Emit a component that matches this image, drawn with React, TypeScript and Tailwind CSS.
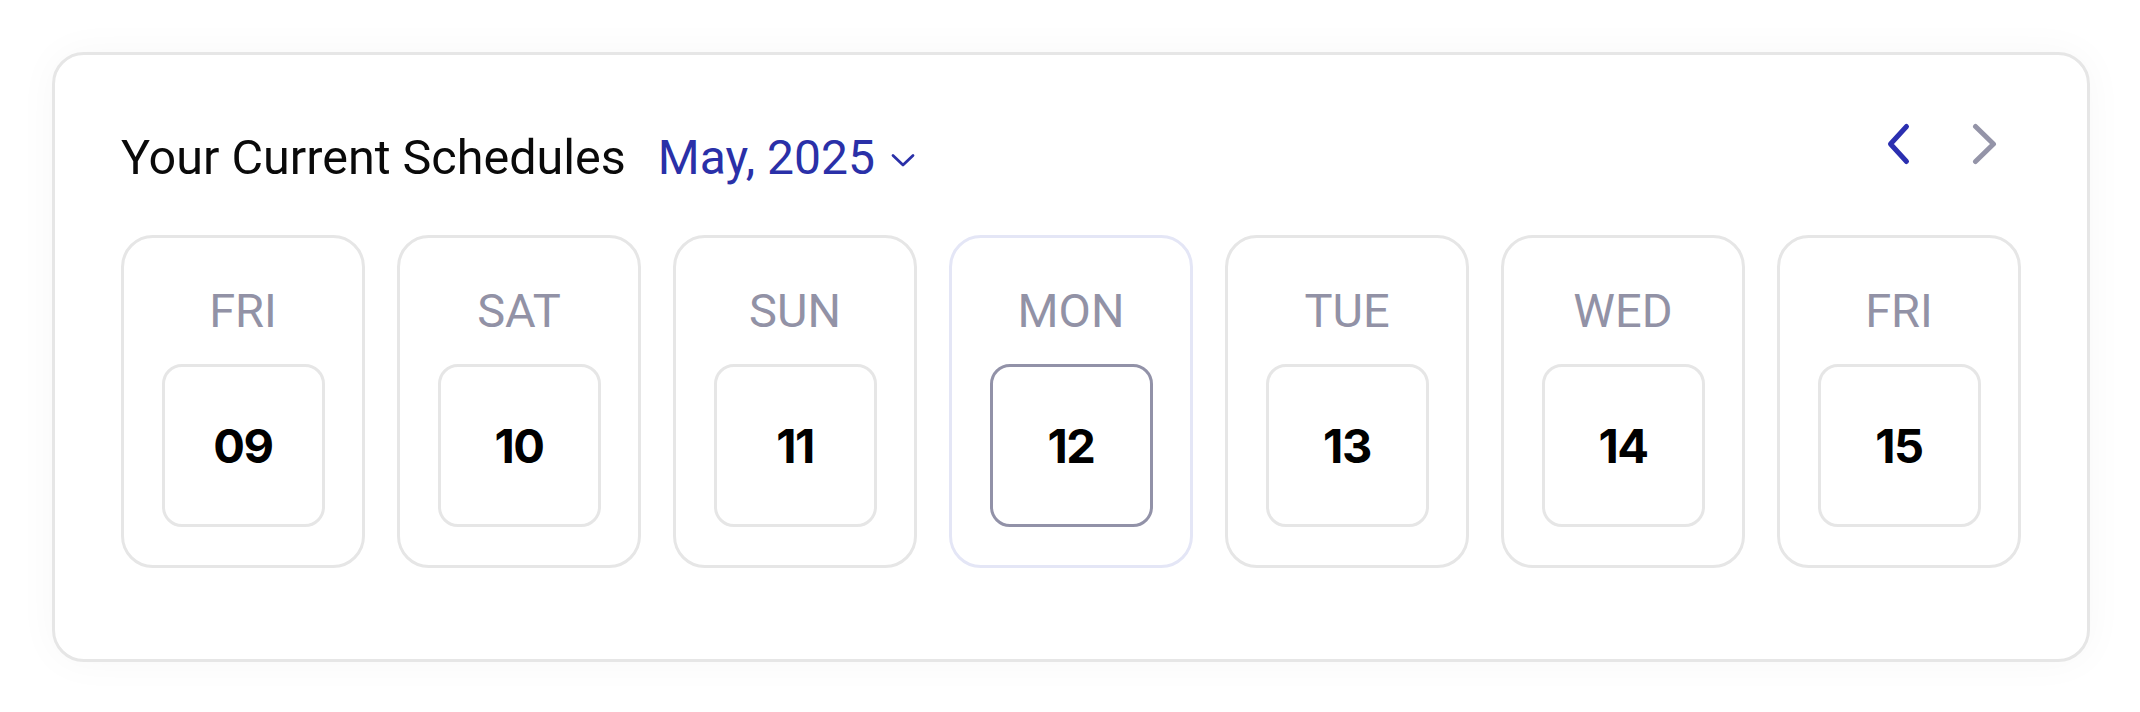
const days = [
  { label: 'FRI', date: '09' },
  { label: 'SAT', date: '10' },
  { label: 'SUN', date: '11' },
  { label: 'MON', date: '12', active: true },
  { label: 'TUE', date: '13' },
  { label: 'WED', date: '14' },
  { label: 'FRI', date: '15' },
];

function DayCard({ label, date, active }: { label: string; date: string; active?: boolean }) {
  return (
    <div
      className={
        active
          ? 'flex h-[333px] w-[244px] flex-col items-center rounded-[32px] border-[3px] border-[#e4e6f6] pt-[49px]'
          : 'flex h-[333px] w-[244px] flex-col items-center rounded-[32px] border-[3px] border-[#e6e6e6] pt-[49px]'
      }
    >
      <span className="h-[47px] text-[47px] leading-none text-[#9292a6] font-['Roboto',sans-serif]">{label}</span>
      <div
        className={
          active
            ? 'mt-[30px] flex h-[163px] w-[163px] items-center justify-center rounded-[20px] border-[3px] border-[#9292a8]'
            : 'mt-[30px] flex h-[163px] w-[163px] items-center justify-center rounded-[20px] border-[3px] border-[#e6e6e6]'
        }
      >
        <span className="text-[47px] leading-none font-bold tracking-[-0.03em] text-black font-['Inter',sans-serif]">
          {date}
        </span>
      </div>
    </div>
  );
}

export default function App() {
  return (
    <div className="min-h-[712px] w-[2140px] bg-white pl-[52px] pt-[52px]">
      <div className="h-[610px] w-[2038px] rounded-[32px] border-[3px] border-[#e6e6e6] bg-white px-[66px] pt-[67px] shadow-[0_0_40px_rgba(0,0,0,0.035)]">
        {/* Header */}
        <div className="flex h-[113px] items-start justify-between">
          <div className="mt-[12px] flex items-center font-['Roboto',sans-serif]">
            <h2 className="text-[48.5px] leading-none font-normal text-[#0a0a0a]">Your Current Schedules</h2>
            <button className="ml-[32px] flex items-center text-[48px] leading-none text-[#2a30a8]">
              <span>May, 2025</span>
              <svg className="ml-[15px]" width="26" height="24" viewBox="0 0 26 24" fill="none">
                <path d="M3 9.5 L13 19 L23 9.5" stroke="#2a30a8" strokeWidth="2.75" strokeLinecap="round" strokeLinejoin="round" />
              </svg>
            </button>
          </div>
          <div className="mr-[24px] flex items-center gap-[59px]">
            <svg width="26" height="44" viewBox="0 0 26 44" fill="none">
              <path d="M20.5 4.5 L4.5 22 L20.5 39.5" stroke="#2b2fb0" strokeWidth="5" strokeLinecap="round" strokeLinejoin="round" />
            </svg>
            <svg width="26" height="44" viewBox="0 0 26 44" fill="none">
              <path d="M4.5 4.5 L22.5 22 L4.5 39.5" stroke="#9494a8" strokeWidth="5" strokeLinecap="round" strokeLinejoin="round" />
            </svg>
          </div>
        </div>

        {/* Days */}
        <div className="flex gap-[32px]">
          {days.map((d, i) => (
            <DayCard key={i} label={d.label} date={d.date} active={d.active} />
          ))}
        </div>
      </div>
    </div>
  );
}
